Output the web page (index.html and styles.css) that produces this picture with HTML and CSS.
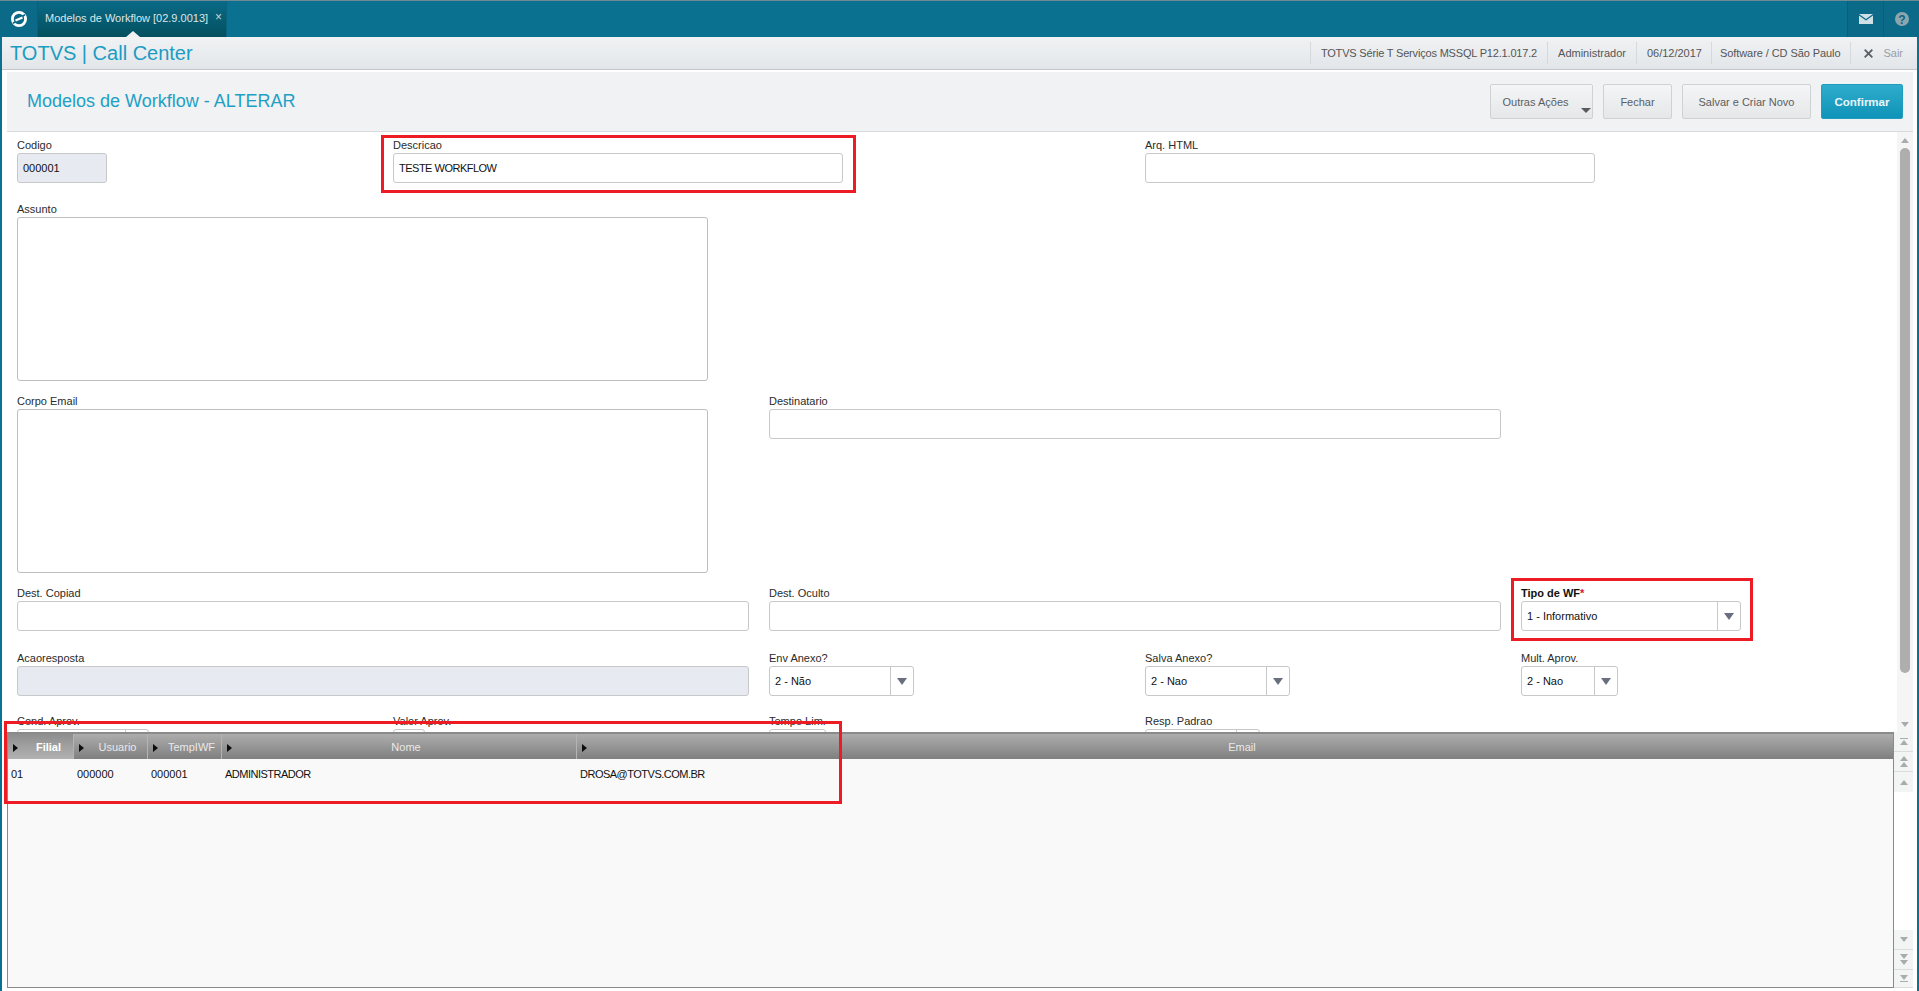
FILE: index.html
```html
<!DOCTYPE html>
<html lang="pt">
<head>
<meta charset="utf-8">
<title>Modelos de Workflow</title>
<link rel="stylesheet" href="styles.css">
</head>
<body>
<header class="topbar">
  <div class="logo-cell">
    <svg width="18" height="18" viewBox="0 0 18 18"><circle cx="9" cy="9" r="6.6" fill="none" stroke="#fff" stroke-width="2.8"/><path d="M3 13.2 8 10.2 M10 7.8 15 4.8" stroke="#0a6a87" stroke-width="1.6"/><path d="M5.5 10.6 12.5 7.4" stroke="#fff" stroke-width="2.2"/></svg>
  </div>
  <div class="tab">
    <span class="tab-text">Modelos de Workflow [02.9.0013]</span>
    <span class="tab-close">×</span>
    <i class="tab-notch"></i>
  </div>
  <div class="spacer"></div>
  <div class="top-icon">
    <svg width="14" height="10" viewBox="0 0 14 10"><path d="M0 0H14L7 5Z M0 1.6 7 6.6 14 1.6V10H0Z" fill="#cfe0e6"/></svg>
  </div>
  <div class="top-icon">
    <svg width="14" height="14" viewBox="0 0 14 14"><circle cx="7" cy="7" r="7" fill="#8ca6b0"/><text x="7" y="11.5" class="help-mark">?</text></svg>
  </div>
</header>

<div class="appbar">
  <div class="app-name">TOTVS | Call Center</div>
  <div class="status">
    <span class="status-item st-long">TOTVS Série T Serviços MSSQL P12.1.017.2</span>
    <span class="status-item">Administrador</span>
    <span class="status-item st-date">06/12/2017</span>
    <span class="status-item st-soft">Software / CD São Paulo</span>
    <span class="status-item status-exit"><svg class="exit-x" width="9" height="9" viewBox="0 0 9 9"><path d="M.7.7 8.3 8.3M8.3.7.7 8.3" stroke="#5c6064" stroke-width="1.9"/></svg>Sair</span>
  </div>
</div>

<main class="content">
  <div class="titlebar">
    <h1 class="page-title">Modelos de Workflow - ALTERAR</h1>
    <div class="actions">
      <button class="btn btn-more">Outras Ações<i class="btn-caret"></i></button>
      <button class="btn btn-close">Fechar</button>
      <button class="btn btn-save">Salvar e Criar Novo</button>
      <button class="btn btn-primary">Confirmar</button>
    </div>
  </div>

  <section class="form-area">
    <div class="form-grid">
      <div class="field f-code c1 r1"><label>Codigo</label><div class="box ro">000001</div></div>
      <div class="field f-450 c2 r1"><label>Descricao</label><div class="box caps">TESTE WORKFLOW</div></div>
      <div class="field f-450 c4 r1"><label>Arq. HTML</label><div class="box"></div></div>

      <div class="field f-area c1 r2"><label>Assunto</label><div class="box tall"></div></div>

      <div class="field f-area c1 r3"><label>Corpo Email</label><div class="box tall"></div></div>
      <div class="field f-wide c3 r3"><label>Destinatario</label><div class="box"></div></div>

      <div class="field f-wide c1 r4"><label>Dest. Copiad</label><div class="box"></div></div>
      <div class="field f-wide c3 r4"><label>Dest. Oculto</label><div class="box"></div></div>
      <div class="field f-tipo c5 r4"><label class="strong">Tipo de WF<em>*</em></label><div class="box sel"><span class="sel-text">1 - Informativo</span><span class="sel-btn"><i class="tri-down"></i></span></div></div>

      <div class="field f-wide c1 r5"><label>Acaoresposta</label><div class="box ro"></div></div>
      <div class="field f-sel c3 r5"><label>Env Anexo?</label><div class="box sel"><span class="sel-text">2 - Não</span><span class="sel-btn"><i class="tri-down"></i></span></div></div>
      <div class="field f-sel c4 r5"><label>Salva Anexo?</label><div class="box sel"><span class="sel-text">2 - Nao</span><span class="sel-btn"><i class="tri-down"></i></span></div></div>
      <div class="field f-mult c5 r5"><label>Mult. Aprov.</label><div class="box sel"><span class="sel-text">2 - Nao</span><span class="sel-btn"><i class="tri-down"></i></span></div></div>

      <div class="field f-cond c1 r6"><label>Cond. Aprov.</label><div class="box sel"><span class="sel-text"></span><span class="sel-btn"></span></div></div>
      <div class="field f-valor c2 r6"><label>Valor Aprov.</label><div class="box"></div></div>
      <div class="field f-tempo c3 r6"><label>Tempo Lim.</label><div class="box"></div></div>
      <div class="field f-resp c4 r6"><label>Resp. Padrao</label><div class="box sel"><span class="sel-text"></span><span class="sel-btn"></span></div></div>
    </div>
    <div class="vscroll">
      <i class="tri-up small"></i>
      <div class="vtrack"><div class="vthumb"></div></div>
      <i class="tri-down small"></i>
    </div>
  </section>

  <section class="grid-panel">
    <div class="table">
      <div class="thead">
        <div class="th col-filial active"><i class="tri-right"></i><span>Filial</span></div>
        <div class="th col-user"><i class="tri-right"></i><span>Usuario</span></div>
        <div class="th col-temp"><i class="tri-right"></i><span>TempIWF</span></div>
        <div class="th col-nome"><i class="tri-right"></i><span>Nome</span></div>
        <div class="th col-email"><i class="tri-right"></i><span>Email</span></div>
      </div>
      <div class="tr">
        <div class="td col-filial">01</div>
        <div class="td col-user">000000</div>
        <div class="td col-temp">000001</div>
        <div class="td col-nome caps">ADMINISTRADOR</div>
        <div class="td col-email caps">DROSA@TOTVS.COM.BR</div>
      </div>
    </div>
    <div class="grid-nav">
      <div class="nav-group">
        <div class="nav-btn"><b class="bar"></b><i class="tri-up small"></i></div>
        <div class="nav-btn"><i class="tri-up small"></i><i class="tri-up small"></i></div>
        <div class="nav-btn"><i class="tri-up small"></i></div>
      </div>
      <div class="nav-group">
        <div class="nav-btn"><i class="tri-down small"></i></div>
        <div class="nav-btn"><i class="tri-down small"></i><i class="tri-down small"></i></div>
        <div class="nav-btn"><i class="tri-down small"></i><b class="bar"></b></div>
      </div>
    </div>
  </section>
</main>

<div class="mark mark-desc"></div>
<div class="mark mark-tipo"></div>
<div class="mark mark-grid"></div>
</body>
</html>
```

FILE: styles.css
```css
* { box-sizing: border-box; }
html, body { margin: 0; height: 100%; }
body {
  height: 991px;
  overflow: hidden;
  display: flex;
  flex-direction: column;
  background: #0b7190;
  font-family: "Liberation Sans", Arial, sans-serif;
  font-size: 11px;
  color: #1c1c1c;
  position: relative;
}
.caps { letter-spacing: -0.5px; }

/* top bar */
.topbar {
  height: 37px;
  flex: none;
  display: flex;
  align-items: stretch;
  background: #0b7190;
  border-top: 1px solid #6f8a94;
}
.logo-cell {
  width: 38px;
  display: flex;
  align-items: center;
  justify-content: center;
  background: #0a6a87;
  border-right: 1px solid #0a5f79;
}
.tab {
  width: 189px;
  position: relative;
  display: flex;
  align-items: center;
  padding: 0 0 2px 7px;
  background: linear-gradient(#0b6a87, #03505f);
  border-right: 1px solid #0a6480;
  color: #dbe7ea;
  font-size: 11px;
}
.tab-text { flex: none; }
.tab-close { margin-left: 7px; margin-top: -2px; font-size: 12px; color: #c4d5da; }
.tab-notch {
  position: absolute;
  left: 88px;
  bottom: 0;
  border: 7px solid transparent;
  border-top: 0;
  border-bottom: 6px solid #eef0f2;
}
.spacer { flex: 1; }
.top-icon {
  width: 36px;
  display: flex;
  align-items: center;
  justify-content: center;
  background: #0a6a87;
  border-left: 1px solid #0a5f79;
}
.help-mark {
  font: bold 12px "Liberation Sans", sans-serif;
  fill: #0b6580;
  text-anchor: middle;
}

/* application bar */
.appbar {
  height: 33px;
  flex: none;
  margin: 0 2px;
  display: flex;
  align-items: center;
  justify-content: space-between;
  background: linear-gradient(#f0f2f4, #e3e6e9);
  border-bottom: 1px solid #c3c7cb;
}
.app-name {
  padding-left: 8px;
  font-size: 20px;
  color: #1b9cc2;
}
.status {
  display: flex;
  align-items: center;
  height: 100%;
  color: #555;
}
.status-item {
  display: flex;
  align-items: center;
  height: 22px;
  padding: 0 10px;
  border-left: 1px solid #d6d9dc;
  white-space: pre;
}
.st-long { letter-spacing: -0.18px; }
.st-date { padding-right: 9px; }
.st-soft { letter-spacing: -0.08px; padding-left: 8px; }
.status-exit { padding: 0 14px 0 13px; color: #9a9ca5; }
.exit-x { margin-right: 10px; }

/* content */
.content {
  flex: 1;
  min-height: 0;
  margin: 0 2px;
  background: #fff;
  display: flex;
  flex-direction: column;
}
.titlebar {
  flex: none;
  height: 60px;
  margin: 2px 4px 0 5px;
  padding: 0 10px 0 20px;
  display: flex;
  align-items: center;
  justify-content: space-between;
  background: #f0f2f3;
  border-bottom: 1px solid #d8dadc;
}
.page-title {
  margin: 0;
  font-size: 18px;
  font-weight: normal;
  color: #1ea0c6;
}
.actions { display: flex; gap: 10px; align-items: center; }
.btn {
  position: relative;
  height: 35px;
  padding: 0;
  font: 11px "Liberation Sans", Arial, sans-serif;
  color: #5a5f63;
  background: linear-gradient(#f4f5f6, #e5e7e9);
  border: 1px solid #cfd2d5;
  border-radius: 2px;
}
.btn-more { width: 103px; padding-right: 12px; }
.btn-close { width: 69px; }
.btn-save { width: 129px; }
.btn-primary {
  width: 82px;
  color: #eaf6fa;
  font-size: 11.5px;
  font-weight: bold;
  background: linear-gradient(#2faccc, #0f93b8);
  border-color: #1f9cbe;
}
.btn-caret {
  position: absolute;
  right: 1px;
  bottom: 5px;
  border: 5px solid transparent;
  border-bottom: 0;
  border-top: 5px solid #555a5f;
}

/* form */
.form-area {
  flex: none;
  height: 600px;
  display: flex;
  overflow: hidden;
}
.form-grid {
  flex: 1;
  padding: 5px 0 0 15px;
  display: grid;
  grid-template-columns: repeat(5, 356px);
  column-gap: 20px;
  grid-template-rows: 64px 192px 192px 65px 63px 46px;
  align-items: start;
}
.c1 { grid-column: 1; }
.c2 { grid-column: 2; }
.c3 { grid-column: 3; }
.c4 { grid-column: 4; }
.c5 { grid-column: 5; }
.r1 { grid-row: 1; }
.r2 { grid-row: 2; }
.r3 { grid-row: 3; }
.r4 { grid-row: 4; }
.r5 { grid-row: 5; }
.r6 { grid-row: 6; }
.field label {
  display: block;
  height: 16px;
  line-height: 16px;
  color: #2b2b2b;
  white-space: nowrap;
}
.field label.strong { font-weight: bold; color: #111; }
.field label em { color: #e0102c; font-style: normal; }
.f-code { width: 90px; }
.f-450 { width: 450px; }
.f-area { width: 691px; }
.f-wide { width: 732px; }
.f-tipo { width: 220px; }
.f-sel { width: 145px; }
.f-mult { width: 97px; }
.f-cond { width: 132px; }
.f-valor { width: 32px; }
.f-tempo { width: 57px; }
.f-resp { width: 115px; }
.box {
  height: 30px;
  display: flex;
  align-items: center;
  padding: 0 5px;
  background: #fff;
  border: 1px solid #c6c8ca;
  border-radius: 3px;
  color: #111;
}
.box.ro { background: #e8eaf1; }
.box.tall { height: 164px; border-color: #bcbec0; }
.box.sel { padding: 0; }
.sel-text { flex: 1; padding-left: 5px; }
.sel-btn {
  flex: none;
  width: 23px;
  height: 28px;
  display: flex;
  align-items: center;
  justify-content: center;
  border-left: 1px solid #c6c8ca;
}
.tri-down {
  display: block;
  border: 5px solid transparent;
  border-bottom: 0;
  border-top: 7px solid #6a6f80;
}
.tri-up {
  display: block;
  border: 5px solid transparent;
  border-top: 0;
  border-bottom: 7px solid #6a6f80;
}
.tri-up.small {
  border-width: 0 4px 5px;
  border-bottom-color: #a9abac;
}
.tri-down.small {
  border-width: 5px 4px 0;
  border-top-color: #a9abac;
}
.vscroll {
  flex: none;
  width: 16px;
  margin-right: 4px;
  padding: 6px 0 5px;
  display: flex;
  flex-direction: column;
  align-items: center;
  gap: 5px;
  background: #f5f5f5;
}
.vtrack { flex: 1; width: 10px; }
.vthumb {
  width: 10px;
  height: 525px;
  background: #aeaeae;
  border-radius: 5px;
}

/* table */
.grid-panel {
  flex: 1;
  min-height: 0;
  margin: 0 4px 3px 5px;
  display: flex;
  background: #fff;
  position: relative;
}
.table {
  flex: none;
  width: 1887px;
  background: #f9f9f9;
  border: 1px solid #8a8a8a;
  border-top: 2px solid #8a8a8a;
}
.thead {
  display: flex;
  height: 25px;
  background: linear-gradient(#adadad, #7f7f7f);
  color: #e9e9e9;
}
.th {
  position: relative;
  display: flex;
  align-items: center;
  justify-content: center;
  padding-left: 14px;
  border-right: 1px solid #b4b4b4;
  font-size: 11px;
}
.th:last-child { border-right: 0; }
.th.active {
  background: linear-gradient(#8e8e8e, #b2b2b2);
  color: #fff;
  font-weight: bold;
  padding-left: 16px;
}
.tri-right {
  position: absolute;
  left: 5px;
  top: 10px;
  border: 4px solid transparent;
  border-right: 0;
  border-left: 5px solid #0d0d0d;
}
.col-filial { width: 66px; }
.col-user { width: 74px; }
.col-temp { width: 74px; }
.col-nome { width: 355px; }
.col-email { flex: 1; }
.tr { display: flex; padding-top: 8px; }
.td { height: 14px; line-height: 14px; padding-left: 3px; color: #111; }
.grid-nav {
  flex: 1;
  display: flex;
  flex-direction: column;
  justify-content: space-between;
  background: #fff;
}
.nav-group { display: flex; flex-direction: column; }
.nav-btn {
  height: 20px;
  display: flex;
  flex-direction: column;
  align-items: center;
  justify-content: center;
  gap: 1px;
  background: #f3f4f4;
  border-bottom: 1px solid #dcdcdc;
}
.nav-group:first-child .nav-btn:last-child { border-bottom: 0; }
.nav-group:last-child .nav-btn:last-child { height: 18px; }
.bar { display: block; width: 8px; height: 1px; background: #a9abac; }

/* red annotations drawn over the screenshot */
.mark {
  position: absolute;
  border: 3px solid #ed1c24;
  pointer-events: none;
}
.mark-desc { left: 381px; top: 135px; width: 475px; height: 58px; }
.mark-tipo { left: 1511px; top: 578px; width: 242px; height: 63px; }
.mark-grid { left: 4px; top: 721px; width: 838px; height: 83px; }
```
